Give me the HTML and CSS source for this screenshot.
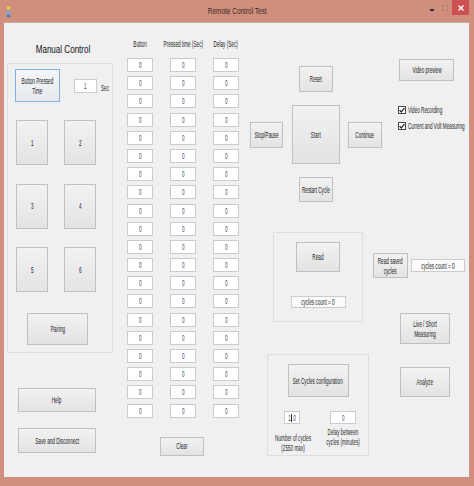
FILE: index.html
```html
<!DOCTYPE html>
<html>
<head>
<meta charset="utf-8">
<link rel="stylesheet" href="styles.css">
</head>
<body>
<div class="window">
  <div class="titlebar">
    <div class="tb-left">
      <svg class="appicon" width="9" height="13" viewBox="0 0 9 13">
        <circle cx="4.5" cy="3" r="2" fill="#e8c84a"/>
        <rect x="2.5" y="5.5" width="4" height="4" rx="1" fill="#7fa6d8"/>
        <circle cx="4.5" cy="11" r="1.6" fill="#4a78c2"/>
      </svg>
    </div>
    <div class="tb-title"><span class="t tt">Remote Control Test</span></div>
    <div class="tb-right">
      <span class="wmin"></span>
      <span class="wmax"></span>
      <span class="wclose"><svg width="6" height="6" viewBox="0 0 6 6"><path d="M0.5 0.5L5.5 5.5M5.5 0.5L0.5 5.5" stroke="#fff" stroke-width="1.3"/></svg></span>
    </div>
  </div>

  <div class="client">
    <div class="col-manual">
      <div class="mc-title"><span class="t tbig">Manual Control</span></div>
      <div class="group mgroup">
        <div class="bpt-row">
          <div class="btn focus bpt"><span class="t">Button Pressed<br>Time</span></div>
          <div class="tb sec-tb"><span class="t">1</span></div>
          <div class="lbl sec-lbl"><span class="t">Sec</span></div>
        </div>
        <div class="num-grid">
          <div class="btn nb"><span class="t">1</span></div>
          <div class="btn nb"><span class="t">2</span></div>
          <div class="btn nb"><span class="t">3</span></div>
          <div class="btn nb"><span class="t">4</span></div>
          <div class="btn nb"><span class="t">5</span></div>
          <div class="btn nb"><span class="t">6</span></div>
        </div>
        <div class="btn pairing"><span class="t">Pairing</span></div>
      </div>
      <div class="btn help"><span class="t">Help</span></div>
      <div class="btn save"><span class="t">Save and Disconnect</span></div>
    </div>

    <div class="col-table">
      <div class="thead">
        <div class="th"><span class="t">Button</span></div>
        <div class="th"><span class="t">Pressed time (Sec)</span></div>
        <div class="th"><span class="t">Delay (Sec)</span></div>
      </div>
      <div class="tgrid">
        <div class="tb cell"><span class="t">0</span></div><div class="tb cell"><span class="t">0</span></div><div class="tb cell"><span class="t">0</span></div>
        <div class="tb cell"><span class="t">0</span></div><div class="tb cell"><span class="t">0</span></div><div class="tb cell"><span class="t">0</span></div>
        <div class="tb cell"><span class="t">0</span></div><div class="tb cell"><span class="t">0</span></div><div class="tb cell"><span class="t">0</span></div>
        <div class="tb cell"><span class="t">0</span></div><div class="tb cell"><span class="t">0</span></div><div class="tb cell"><span class="t">0</span></div>
        <div class="tb cell"><span class="t">0</span></div><div class="tb cell"><span class="t">0</span></div><div class="tb cell"><span class="t">0</span></div>
        <div class="tb cell"><span class="t">0</span></div><div class="tb cell"><span class="t">0</span></div><div class="tb cell"><span class="t">0</span></div>
        <div class="tb cell"><span class="t">0</span></div><div class="tb cell"><span class="t">0</span></div><div class="tb cell"><span class="t">0</span></div>
        <div class="tb cell"><span class="t">0</span></div><div class="tb cell"><span class="t">0</span></div><div class="tb cell"><span class="t">0</span></div>
        <div class="tb cell"><span class="t">0</span></div><div class="tb cell"><span class="t">0</span></div><div class="tb cell"><span class="t">0</span></div>
        <div class="tb cell"><span class="t">0</span></div><div class="tb cell"><span class="t">0</span></div><div class="tb cell"><span class="t">0</span></div>
        <div class="tb cell"><span class="t">0</span></div><div class="tb cell"><span class="t">0</span></div><div class="tb cell"><span class="t">0</span></div>
        <div class="tb cell"><span class="t">0</span></div><div class="tb cell"><span class="t">0</span></div><div class="tb cell"><span class="t">0</span></div>
        <div class="tb cell"><span class="t">0</span></div><div class="tb cell"><span class="t">0</span></div><div class="tb cell"><span class="t">0</span></div>
        <div class="tb cell"><span class="t">0</span></div><div class="tb cell"><span class="t">0</span></div><div class="tb cell"><span class="t">0</span></div>
        <div class="tb cell"><span class="t">0</span></div><div class="tb cell"><span class="t">0</span></div><div class="tb cell"><span class="t">0</span></div>
        <div class="tb cell"><span class="t">0</span></div><div class="tb cell"><span class="t">0</span></div><div class="tb cell"><span class="t">0</span></div>
        <div class="tb cell"><span class="t">0</span></div><div class="tb cell"><span class="t">0</span></div><div class="tb cell"><span class="t">0</span></div>
        <div class="tb cell"><span class="t">0</span></div><div class="tb cell"><span class="t">0</span></div><div class="tb cell"><span class="t">0</span></div>
        <div class="tb cell"><span class="t">0</span></div><div class="tb cell"><span class="t">0</span></div><div class="tb cell"><span class="t">0</span></div>
        <div class="tb cell"><span class="t">0</span></div><div class="tb cell"><span class="t">0</span></div><div class="tb cell"><span class="t">0</span></div>
      </div>
      <div class="btn clear"><span class="t">Clear</span></div>
    </div>

    <div class="col-right">
      <div class="r-row1">
        <div class="cluster">
          <div class="btn reset"><span class="t">Reset</span></div>
          <div class="btn stop"><span class="t">Stop/Pause</span></div>
          <div class="btn start"><span class="t">Start</span></div>
          <div class="btn cont"><span class="t">Continue</span></div>
          <div class="btn restart"><span class="t">Restart Cycle</span></div>
        </div>
        <div class="rstack">
          <div class="btn vprev"><span class="t">Video preview</span></div>
          <div class="cb cb1">
            <span class="box"><svg width="6" height="6" viewBox="0 0 6 6"><path d="M0.6 3.2L2.3 5L5.4 0.8" fill="none" stroke="#222" stroke-width="1.2"/></svg></span>
            <span class="t tl">Video Recording</span>
          </div>
          <div class="cb cb2">
            <span class="box"><svg width="6" height="6" viewBox="0 0 6 6"><path d="M0.6 3.2L2.3 5L5.4 0.8" fill="none" stroke="#222" stroke-width="1.2"/></svg></span>
            <span class="t tl">Current and Volt Measuring</span>
          </div>
        </div>
      </div>

      <div class="r-row2">
        <div class="group readgroup">
          <div class="btn read"><span class="t">Read</span></div>
          <div class="blabel rcount"><span class="t">cycles count = 0</span></div>
        </div>
        <div class="r2-right">
          <div class="saved-row">
            <div class="btn rsaved"><span class="t">Read saved<br>cycles</span></div>
            <div class="blabel scount"><span class="t">cycles count = 0</span></div>
          </div>
          <div class="btn live"><span class="t">Live / Short<br>Measuring</span></div>
        </div>
      </div>

      <div class="r-row3">
        <div class="group setgroup">
          <div class="btn setcfg"><span class="t">Set Cycles configuration</span></div>
          <div class="set-sub">
            <div class="sub-col">
              <div class="tb ncyc"><span class="t">1</span><i class="caret"></i><span class="t">0</span></div>
              <div class="lbl sublbl lblA"><span class="t">Number of cycles<br>(2550 max)</span></div>
            </div>
            <div class="sub-col">
              <div class="tb dcyc"><span class="t">0</span></div>
              <div class="lbl sublbl lblB"><span class="t">Delay between<br>cycles (minutes)</span></div>
            </div>
          </div>
        </div>
        <div class="btn analyze"><span class="t">Analyze</span></div>
      </div>
    </div>
  </div>
</div>
</body>
</html>
```

FILE: styles.css
```css
html, body {
  margin: 0;
  padding: 0;
}
body {
  width: 474px;
  height: 486px;
  background: #cf8f7c;
  font-family: "Liberation Sans", Arial, sans-serif;
  color: #2a2a2a;
  overflow: hidden;
}
.window {
  height: 486px;
  display: flex;
  flex-direction: column;
}
.titlebar {
  height: 22px;
  display: grid;
  grid-template-columns: 1fr auto 1fr;
  align-items: center;
}
.tb-left {
  display: flex;
  align-items: center;
  padding-left: 4px;
}
.appicon {
  display: block;
}
.tb-title {
  display: flex;
  justify-content: center;
}
.t {
  display: inline-block;
  white-space: nowrap;
  transform: scaleX(0.56);
  font-size: 8.3px;
  line-height: 10px;
}
.tt {
  font-size: 9.5px;
  color: #3a2a26;
  transform: scaleX(0.68);
}
.tb-right {
  display: flex;
  justify-content: flex-end;
  align-items: flex-start;
  height: 22px;
}
.wmin {
  width: 4px;
  height: 2px;
  background: #3a2a26;
  margin-top: 9px;
  margin-right: 8px;
}
.wmax {
  width: 4px;
  height: 4px;
  border: 1px solid #b88677;
  margin-top: 5px;
  margin-right: 4px;
}
.wclose {
  width: 17px;
  height: 15px;
  margin-right: 5px;
  background: #cc514f;
  display: flex;
  align-items: center;
  justify-content: center;
}
.wclose svg {
  display: block;
}

.client {
  flex: 1;
  min-width: 0;
  margin: 0 5px 9px 4px;
  background: #f0f0f0;
  display: flex;
  overflow: hidden;
  box-shadow: inset 0 1px 0 #c9a99f;
}

/* generic controls */
.btn {
  box-sizing: border-box;
  border: 1px solid #c0c0c0;
  background: linear-gradient(#f2f2f2, #e3e3e3);
  display: flex;
  align-items: center;
  justify-content: center;
  text-align: center;
  color: #222;
  flex-shrink: 0;
}
.btn.focus {
  border-color: #7fb0e6;
  background: linear-gradient(#f4f6f9, #e6e9ee);
}
.tb {
  box-sizing: border-box;
  background: #fff;
  border: 1px solid #cbcbcb;
  display: flex;
  align-items: center;
  justify-content: center;
  color: #4a4a4a;
  flex-shrink: 0;
}
.blabel {
  box-sizing: border-box;
  background: #fafafa;
  border: 1px solid #cbcbcb;
  display: flex;
  align-items: center;
  justify-content: center;
  color: #2a2a2a;
  flex-shrink: 0;
}
.lbl {
  color: #2a2a2a;
}
.group {
  box-sizing: border-box;
  border: 1px solid #dedede;
  flex-shrink: 0;
}

/* manual column */
.col-manual {
  width: 114px;
  flex-shrink: 0;
  padding-left: 3px;
  box-sizing: border-box;
  display: flex;
  flex-direction: column;
  align-items: flex-start;
}
.mc-title {
  margin-top: 20px;
  width: 106px;
  padding-left: 6px;
  box-sizing: border-box;
  height: 14px;
  display: flex;
  justify-content: center;
}
.tbig {
  font-size: 11.5px;
  line-height: 14px;
  color: #111;
  transform: scaleX(0.7);
}
.mgroup {
  margin-top: 7px;
  width: 106px;
  height: 290px;
  padding: 5px 7px;
  display: flex;
  flex-direction: column;
  align-items: flex-start;
}
.bpt-row {
  display: flex;
  align-items: center;
}
.bpt {
  width: 45px;
  height: 33px;
}
.sec-tb {
  width: 23px;
  height: 14px;
  margin-left: 14px;
}
.sec-lbl {
  margin-left: 4px;
  width: 10px;
  overflow: hidden;
}
.sec-lbl .t {
  transform-origin: left center;
}
.num-grid {
  margin-top: 18px;
  margin-left: 1px;
  display: grid;
  grid-template-columns: 32px 32px;
  column-gap: 16px;
  row-gap: 18.5px;
}
.nb {
  height: 45px;
}
.pairing {
  margin-top: 21px;
  margin-left: 12px;
  width: 61px;
  height: 32px;
}
.help {
  margin-top: 35px;
  margin-left: 11px;
  width: 78px;
  height: 24px;
}
.save {
  margin-top: 16px;
  margin-left: 11px;
  width: 78px;
  height: 25px;
}

/* table column */
.col-table {
  width: 130px;
  flex-shrink: 0;
  display: flex;
  flex-direction: column;
  align-items: flex-start;
}
.thead {
  margin-top: 16px;
  display: grid;
  grid-template-columns: 44px 42px 44px;
  height: 12px;
  color: #1e1e1e;
}
.th {
  display: flex;
  justify-content: center;
  min-width: 0;
}
.th .t {
  line-height: 12px;
}
.tgrid {
  margin-top: 8px;
  display: grid;
  grid-template-columns: 44px 42px 44px;
  row-gap: 4.2px;
  justify-items: center;
}
.cell {
  width: 26px;
  height: 14px;
}
.clear {
  margin-top: 19px;
  margin-left: 42px;
  width: 44px;
  height: 19px;
}

/* right column */
.col-right {
  flex: 1;
  min-width: 0;
  display: flex;
  flex-direction: column;
}
.r-row1 {
  margin-top: 37px;
  display: flex;
  align-items: flex-start;
}
.cluster {
  margin-top: 7px;
  margin-left: 2px;
  display: grid;
  grid-template-columns: 33px 48px 34px;
  column-gap: 8.5px;
  row-gap: 13px;
  flex-shrink: 0;
}
.reset {
  grid-column: 2;
  grid-row: 1;
  justify-self: center;
  width: 34px;
  height: 26px;
}
.stop {
  grid-column: 1;
  grid-row: 2;
  align-self: center;
  height: 26px;
}
.start {
  grid-column: 2;
  grid-row: 2;
  height: 59px;
}
.cont {
  grid-column: 3;
  grid-row: 2;
  align-self: center;
  height: 26px;
}
.restart {
  grid-column: 2;
  grid-row: 3;
  justify-self: center;
  width: 34px;
  height: 25px;
}
.rstack {
  margin-left: 17px;
  display: flex;
  flex-direction: column;
  align-items: flex-start;
}
.vprev {
  width: 55px;
  height: 22px;
}
.cb {
  display: flex;
  align-items: center;
  height: 11px;
  width: 68px;
  overflow: hidden;
  margin-left: -1px;
}
.cb1 {
  margin-top: 23px;
}
.cb2 {
  margin-top: 5px;
}
.box {
  width: 8px;
  height: 8px;
  box-sizing: border-box;
  border: 1px solid #4a4a4a;
  background: #fff;
  display: flex;
  align-items: center;
  justify-content: center;
  margin-right: 2px;
  flex-shrink: 0;
}
.box svg {
  display: block;
}
.tl {
  transform-origin: left center;
  color: #1e1e1e;
}

.r-row2 {
  margin-top: 30px;
  display: flex;
  align-items: flex-start;
}
.readgroup {
  margin-left: 25px;
  width: 90px;
  height: 90px;
  padding-top: 9px;
  display: flex;
  flex-direction: column;
  align-items: center;
}
.read {
  width: 44px;
  height: 30px;
}
.rcount {
  margin-top: 24px;
  width: 55px;
  height: 12px;
}
.r2-right {
  margin-left: 10px;
  display: flex;
  flex-direction: column;
  align-items: flex-start;
}
.saved-row {
  margin-top: 21px;
  display: flex;
  align-items: center;
}
.rsaved {
  width: 35px;
  height: 25px;
}
.scount {
  margin-left: 3px;
  width: 54px;
  height: 13px;
  overflow: hidden;
}
.live {
  margin-top: 35px;
  margin-left: 27px;
  width: 50px;
  height: 31px;
}

.r-row3 {
  margin-top: 10px;
  display: flex;
  align-items: flex-start;
}
.setgroup {
  margin-left: 19px;
  width: 102px;
  height: 102px;
  padding-top: 9px;
  display: flex;
  flex-direction: column;
  align-items: center;
}
.setcfg {
  width: 61px;
  height: 33px;
}
.set-sub {
  margin-top: 14px;
  display: grid;
  grid-template-columns: 50px 50px;
  justify-content: center;
}
.sub-col {
  display: flex;
  flex-direction: column;
  align-items: center;
  min-width: 0;
}
.ncyc {
  width: 16px;
  height: 13px;
  margin-right: 3px;
}
.ncyc .t {
  width: 3px;
  display: flex;
  justify-content: center;
}
.caret {
  display: block;
  width: 1px;
  height: 8px;
  background: #333;
  margin: 0 0.5px;
}
.dcyc {
  width: 26px;
  height: 13px;
}
.sublbl {
  display: flex;
  justify-content: center;
  text-align: center;
}
.lblA {
  margin-top: 9px;
}
.lblB {
  margin-top: 3px;
}
.analyze {
  margin-left: 31px;
  margin-top: 13px;
  width: 50px;
  height: 30px;
}
```
